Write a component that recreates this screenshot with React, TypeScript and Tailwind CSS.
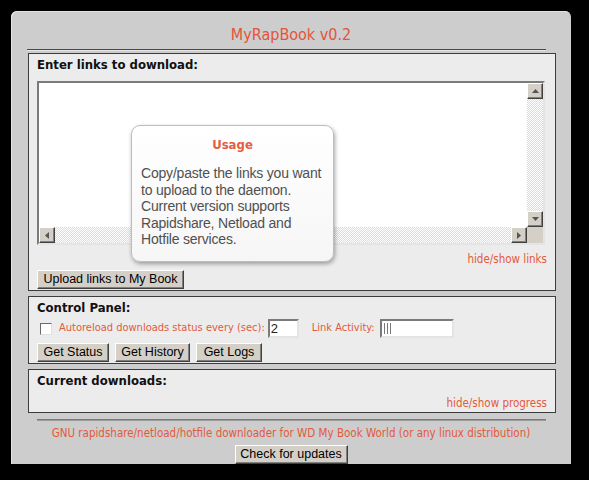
const tah = "font-['DejaVu_Sans_Condensed','DejaVu_Sans',sans-serif]";
const arial = "font-['Liberation_Sans',Arial,sans-serif]";
const bevel =
  "bg-[#d4d0c8] border border-t-white border-l-white border-r-[#404040] border-b-[#404040] shadow-[inset_-1px_-1px_0_#808080]";
const inset =
  "bg-white border-2 border-t-[#7a7a7a] border-l-[#7a7a7a] border-r-[#e4e4e4] border-b-[#e4e4e4]";
const track =
  "bg-[image:repeating-conic-gradient(#dedbd4_0%_25%,#ffffff_0%_50%)] bg-[length:2px_2px]";

function Arrow({ dir }: { dir: "up" | "down" | "left" | "right" }) {
  const pts = {
    up: "0,4 7,4 3.5,0",
    down: "0,0 7,0 3.5,4",
    left: "4,0 4,7 0,3.5",
    right: "0,0 0,7 4,3.5",
  }[dir];
  const w = dir === "up" || dir === "down" ? 7 : 4;
  const h = dir === "up" || dir === "down" ? 4 : 7;
  return (
    <div className={`w-[16px] h-[16px] flex items-center justify-center ${bevel}`}>
      <svg width={w} height={h} viewBox={`0 0 ${w} ${h}`}>
        <polygon points={pts} fill="#555" />
      </svg>
    </div>
  );
}

function Btn({ label, w }: { label: string; w: string }) {
  return (
    <div className={`${w} h-[19px] ${bevel} ${arial} text-[12.5px] leading-[17px] text-black text-center`}>
      {label}
    </div>
  );
}

export default function App() {
  return (
    <div className="w-[589px] h-[480px] bg-black overflow-hidden pt-[11px] pl-[11px]">
      <div className="w-[560px] h-[453px] bg-[#cdcdcd] rounded-t-[6px] flex flex-col shadow-[inset_1px_1px_0_#e2e2e2]">
        <div className={`pt-[14px] h-[39px] text-center text-[16px] leading-[20px] text-[#e5533a] ${tah}`}>
          MyRapBook v0.2
        </div>
        <div className="ml-[16px] w-[519px] border-t border-t-[#4a4a4a] border-b border-b-[#e6e6e6]" />

        {/* links section */}
        <div className="relative ml-[17px] mt-[2px] w-[528px] border border-[#3c3c3c] bg-[#ececec] px-[8px] pb-[1px]">
          <div className={`h-[27px] leading-[22px] text-[13px] font-bold text-[#111] ${tah}`}>
            Enter links to download:
          </div>
          <div className={`w-[508px] h-[164px] ${inset} flex flex-col`}>
            <div className="flex-1 flex">
              <div className="flex-1" />
              <div className={`w-[16px] flex flex-col justify-between ${track}`}>
                <Arrow dir="up" />
                <Arrow dir="down" />
              </div>
            </div>
            <div className="h-[16px] flex">
              <div className={`flex-1 flex justify-between ${track}`}>
                <Arrow dir="left" />
                <Arrow dir="right" />
              </div>
              <div className="w-[16px] bg-[#d4d0c8]" />
            </div>
          </div>
          <div className={`mt-[7px] h-[14px] leading-[14px] text-right text-[11.5px] text-[#e25a3c] ${tah}`}>
            hide/show links
          </div>
          <div className="mt-[4px] flex">
            <Btn label="Upload links to My Book" w="w-[147px]" />
          </div>

          <div className="absolute left-[102px] top-[71px] w-[203px] h-[137px] rounded-[9px] border border-[#bdbdbd] bg-gradient-to-b from-white to-[#f6f6f6] shadow-[1px_2px_4px_rgba(0,0,0,0.35)] pl-[9px] pr-[2px] pt-[11px]">
            <div className={`pr-[7px] text-center text-[13px] font-bold leading-[16px] text-[#e2603f] ${tah}`}>Usage</div>
            <div className={`mt-[12px] text-[14px] leading-[16.5px] tracking-[-0.2px] text-[#505050] ${arial}`}>
              Copy/paste the links you want
              <br />
              to upload to the daemon.
              <br />
              Current version supports
              <br />
              Rapidshare, Netload and
              <br />
              Hotfile services.
            </div>
          </div>
        </div>

        {/* control panel */}
        <div className="ml-[17px] mt-[5px] w-[528px] border border-[#3c3c3c] bg-[#ececec] px-[8px] pb-[1px]">
          <div className={`h-[22px] leading-[22px] text-[13px] font-bold text-[#111] ${tah}`}>Control Panel:</div>
          <div className={`h-[19px] flex items-center text-[11px] text-[#e25a3c] ${tah}`}>
            <div className="ml-[3px] w-[12px] h-[12px] bg-white border border-t-[#6a6a6a] border-l-[#6a6a6a] border-r-[#e0e0e0] border-b-[#e0e0e0]" />
            <span className="ml-[7px]">Autoreload downloads status every (sec):</span>
            <div className={`ml-[3px] w-[31px] h-[19px] ${inset} ${arial} text-[13px] leading-[15px] pl-[1px] text-[#222]`}>
              2
            </div>
            <span className="ml-[13px]">Link Activity:</span>
            <div className={`ml-[5px] w-[74px] h-[19px] ${inset} flex items-center gap-[2px] pl-[2px]`}>
              <div className="w-px h-[11px] bg-[#777]" />
              <div className="w-px h-[11px] bg-[#777]" />
              <div className="w-px h-[11px] bg-[#777]" />
            </div>
          </div>
          <div className="mt-[5px] flex gap-[6px]">
            <Btn label="Get Status" w="w-[72px]" />
            <Btn label="Get History" w="w-[75px]" />
            <Btn label="Get Logs" w="w-[66px]" />
          </div>
        </div>

        {/* downloads */}
        <div className="ml-[17px] mt-[5px] w-[528px] border border-[#3c3c3c] bg-[#ececec] px-[8px] pb-[2px]">
          <div className={`h-[22px] leading-[22px] text-[13px] font-bold text-[#111] ${tah}`}>Current downloads:</div>
          <div className={`mt-[4px] h-[14px] leading-[14px] text-right text-[11.5px] text-[#e25a3c] ${tah}`}>
            hide/show progress
          </div>
        </div>

        <div className="ml-[26px] mt-[6px] w-[509px] border-t border-t-[#7a7a7a] border-b border-b-[#9a9a9a]" />
        <div className={`mt-[5px] h-[14px] leading-[14px] text-center text-[11.5px] text-[#e25a3c] ${tah}`}>
          GNU rapidshare/netload/hotfile downloader for WD My Book World (or any linux distribution)
        </div>
        <div className="mt-[5px] flex justify-center">
          <Btn label="Check for updates" w="w-[113px]" />
        </div>
      </div>
    </div>
  );
}
